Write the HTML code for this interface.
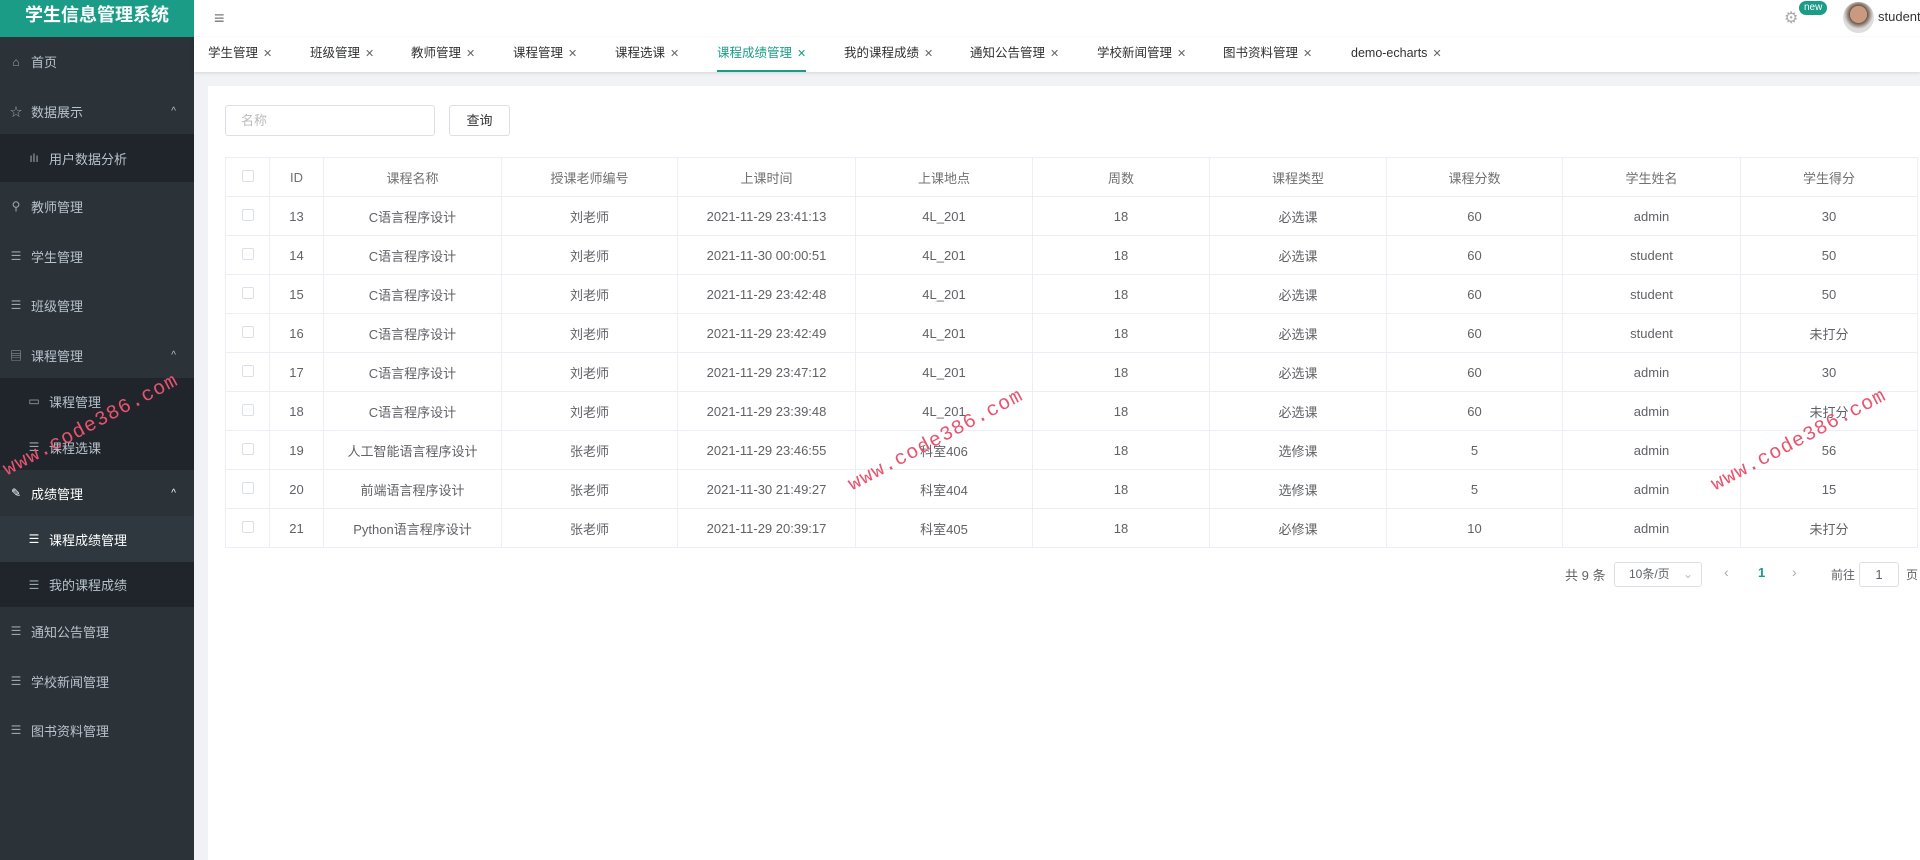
<!DOCTYPE html>
<html><head><meta charset="utf-8"><style>
*{margin:0;padding:0;box-sizing:border-box}
body{width:1920px;height:860px;overflow:hidden;background:#f0f2f5;font-family:"Liberation Sans","Noto Sans CJK SC",sans-serif;font-size:14px;color:#606266;position:relative}
.side{position:absolute;left:0;top:0;width:194px;height:860px;background:#2b3238}
.logo{height:37px;background:#1a9c87;color:#fff;font-weight:bold;font-size:18px;text-align:center;line-height:30px}
.mi{position:absolute;left:0;width:194px;color:#b8c2cc;font-size:13px;display:flex;align-items:center}
.mi span.ic{width:14px;margin-left:9px;margin-right:8px;color:#9aa5b0;font-size:12px;text-align:center}
.sub{background:#1f252b}
.top{position:absolute;left:194px;top:0;right:0;height:37px;background:#fff}
.tabs{position:absolute;left:194px;top:37px;right:0;height:35px;background:#fff;box-shadow:0 1px 3px rgba(0,0,0,.12)}
.tab{position:absolute;top:0;height:35px;line-height:32px;font-size:12.5px;color:#303133;white-space:nowrap}
.tab i{font-style:normal;color:#666;margin-left:5px;font-size:11px}
.card{position:absolute;left:208px;top:86px;right:0;bottom:0;background:#fff}
table{position:absolute;left:225px;top:157px;width:1693px;border-collapse:collapse;font-size:13px}
td,th{border:1px solid #ebeef5;height:39px;text-align:center;font-weight:normal;color:#606266}
th{height:39px;color:#707070}
.cb{display:inline-block;width:12px;height:12px;border:1px solid #dcdfe6;border-radius:2px;background:#fff}
.wm{position:absolute;color:#e8546f;font-family:"Liberation Mono",monospace;font-size:20px;transform:rotate(-28deg);transform-origin:left center;letter-spacing:1px}
</style></head><body>
<div class="side">
<div class="logo">学生信息管理系统</div>
<div class="mi" style="top:37px;height:49px"><span class="ic">⌂</span>首页</div>
<div class="mi" style="top:88px;height:46px"><span class="ic">☆</span>数据展示<span style="position:absolute;right:18px;font-size:10px">^</span></div>
<div class="mi sub" style="top:134px;height:48px;padding-left:18px"><span class="ic">ılı</span>用户数据分析</div>
<div class="mi" style="top:182px;height:48px"><span class="ic">⚲</span>教师管理</div>
<div class="mi" style="top:232px;height:48px"><span class="ic">☰</span>学生管理</div>
<div class="mi" style="top:281px;height:48px"><span class="ic">☰</span>班级管理</div>
<div class="mi" style="top:331px;height:48px"><span class="ic">▤</span>课程管理<span style="position:absolute;right:18px;font-size:10px">^</span></div>
<div class="mi sub" style="top:378px;height:46px;padding-left:18px"><span class="ic">▭</span>课程管理</div>
<div class="mi sub" style="top:424px;height:46px;padding-left:18px"><span class="ic">☰</span>课程选课</div>
<div class="mi" style="top:470px;height:46px;color:#fff"><span class="ic" style="color:#fff">✎</span>成绩管理<span style="position:absolute;right:18px;font-size:10px">^</span></div>
<div class="mi sub" style="top:516px;height:46px;padding-left:18px;color:#fff;background:#2f383f"><span class="ic" style="color:#fff">☰</span>课程成绩管理</div>
<div class="mi sub" style="top:562px;height:45px;padding-left:18px"><span class="ic">☰</span>我的课程成绩</div>
<div class="mi" style="top:607px;height:48px"><span class="ic">☰</span>通知公告管理</div>
<div class="mi" style="top:657px;height:48px"><span class="ic">☰</span>学校新闻管理</div>
<div class="mi" style="top:706px;height:48px"><span class="ic">☰</span>图书资料管理</div>
</div>
<div class="top">
<div style="position:absolute;left:20px;top:8px;font-size:18px;color:#777">≡</div>
<div style="position:absolute;left:1590px;top:8px;font-size:16px;color:#aaa">⚙</div>
<div style="position:absolute;left:1605px;top:1px;background:#1a9c87;color:#fff;font-size:10px;border-radius:8px;padding:0 5px;line-height:14px">new</div>
<div style="position:absolute;left:1649px;top:2px;width:31px;height:31px;border-radius:50%;background:radial-gradient(circle at 50% 40%,#c99a7f 0 35%,#6b5646 36%,#ddd 60%)"></div>
<div style="position:absolute;left:1684px;top:9px;font-size:13px;color:#333">student</div>
</div>
<div class="tabs">
<div class="tab" style="left:14px">学生管理<i>✕</i></div>
<div class="tab" style="left:116px">班级管理<i>✕</i></div>
<div class="tab" style="left:217px">教师管理<i>✕</i></div>
<div class="tab" style="left:319px">课程管理<i>✕</i></div>
<div class="tab" style="left:421px">课程选课<i>✕</i></div>
<div class="tab" style="left:523px;color:#1a9c87;border-bottom:2px solid #1a9c87">课程成绩管理<i style="color:#1a9c87">✕</i></div>
<div class="tab" style="left:650px">我的课程成绩<i>✕</i></div>
<div class="tab" style="left:776px">通知公告管理<i>✕</i></div>
<div class="tab" style="left:903px">学校新闻管理<i>✕</i></div>
<div class="tab" style="left:1029px">图书资料管理<i>✕</i></div>
<div class="tab" style="left:1157px">demo-echarts<i>✕</i></div>
</div>
<div class="card"></div>
<div style="position:absolute;left:225px;top:105px;width:210px;height:31px;border:1px solid #dcdfe6;border-radius:3px;background:#fff;color:#bbb;font-size:13px;line-height:29px;padding-left:15px">名称</div>
<div style="position:absolute;left:449px;top:105px;width:61px;height:31px;border:1px solid #dcdfe6;border-radius:3px;background:#fff;color:#333;font-size:13px;line-height:29px;text-align:center">查询</div>
<table>
<colgroup><col style="width:44px"><col style="width:54px"><col style="width:178px"><col style="width:176px"><col style="width:178px"><col style="width:177px"><col style="width:177px"><col style="width:177px"><col style="width:176px"><col style="width:178px"><col></colgroup>
<tr><th><span class="cb"></span></th><th>ID</th><th>课程名称</th><th>授课老师编号</th><th>上课时间</th><th>上课地点</th><th>周数</th><th>课程类型</th><th>课程分数</th><th>学生姓名</th><th>学生得分</th></tr>
<tr><td><span class="cb"></span></td><td>13</td><td>C语言程序设计</td><td>刘老师</td><td>2021-11-29 23:41:13</td><td>4L_201</td><td>18</td><td>必选课</td><td>60</td><td>admin</td><td>30</td></tr>
<tr><td><span class="cb"></span></td><td>14</td><td>C语言程序设计</td><td>刘老师</td><td>2021-11-30 00:00:51</td><td>4L_201</td><td>18</td><td>必选课</td><td>60</td><td>student</td><td>50</td></tr>
<tr><td><span class="cb"></span></td><td>15</td><td>C语言程序设计</td><td>刘老师</td><td>2021-11-29 23:42:48</td><td>4L_201</td><td>18</td><td>必选课</td><td>60</td><td>student</td><td>50</td></tr>
<tr><td><span class="cb"></span></td><td>16</td><td>C语言程序设计</td><td>刘老师</td><td>2021-11-29 23:42:49</td><td>4L_201</td><td>18</td><td>必选课</td><td>60</td><td>student</td><td>未打分</td></tr>
<tr><td><span class="cb"></span></td><td>17</td><td>C语言程序设计</td><td>刘老师</td><td>2021-11-29 23:47:12</td><td>4L_201</td><td>18</td><td>必选课</td><td>60</td><td>admin</td><td>30</td></tr>
<tr><td><span class="cb"></span></td><td>18</td><td>C语言程序设计</td><td>刘老师</td><td>2021-11-29 23:39:48</td><td>4L_201</td><td>18</td><td>必选课</td><td>60</td><td>admin</td><td>未打分</td></tr>
<tr><td><span class="cb"></span></td><td>19</td><td>人工智能语言程序设计</td><td>张老师</td><td>2021-11-29 23:46:55</td><td>科室406</td><td>18</td><td>选修课</td><td>5</td><td>admin</td><td>56</td></tr>
<tr><td><span class="cb"></span></td><td>20</td><td>前端语言程序设计</td><td>张老师</td><td>2021-11-30 21:49:27</td><td>科室404</td><td>18</td><td>选修课</td><td>5</td><td>admin</td><td>15</td></tr>
<tr><td><span class="cb"></span></td><td>21</td><td>Python语言程序设计</td><td>张老师</td><td>2021-11-29 20:39:17</td><td>科室405</td><td>18</td><td>必修课</td><td>10</td><td>admin</td><td>未打分</td></tr>
</table>
<div style="position:absolute;left:1565px;top:565px;font-size:13px;color:#606266">共 9 条</div>
<div style="position:absolute;left:1614px;top:562px;width:88px;height:25px;border:1px solid #dcdfe6;border-radius:3px;font-size:12px;line-height:23px;padding-left:14px">10条/页<span style="position:absolute;right:8px;color:#bbb">⌄</span></div>
<div style="position:absolute;left:1724px;top:564px;color:#aaa">‹</div>
<div style="position:absolute;left:1758px;top:565px;color:#1a9c87;font-weight:bold;font-size:13px">1</div>
<div style="position:absolute;left:1792px;top:564px;color:#aaa">›</div>
<div style="position:absolute;left:1831px;top:566px;font-size:12px">前往</div>
<div style="position:absolute;left:1859px;top:562px;width:40px;height:25px;border:1px solid #dcdfe6;border-radius:3px;text-align:center;line-height:23px;font-size:13px">1</div>
<div style="position:absolute;left:1906px;top:566px;font-size:12px">页</div>
<div class="wm" style="left:5px;top:460px">www.code386.com</div>
<div class="wm" style="left:850px;top:475px">www.code386.com</div>
<div class="wm" style="left:1713px;top:475px">www.code386.com</div>
</body></html>
